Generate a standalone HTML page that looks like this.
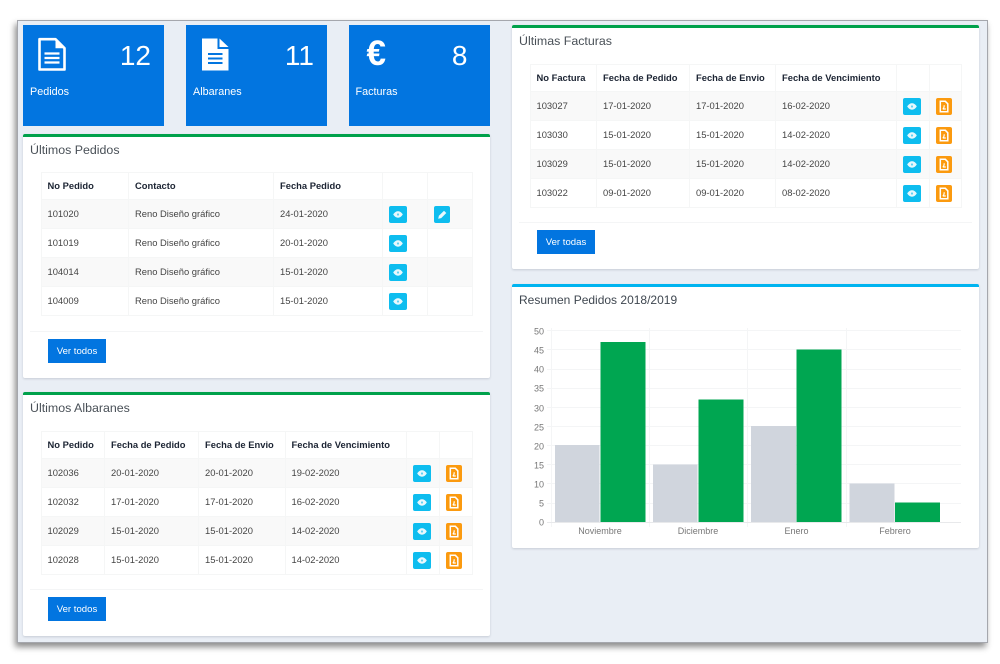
<!DOCTYPE html>
<html lang="es"><head><meta charset="utf-8"><title>Panel</title>
<style>
*{box-sizing:border-box}
html,body{margin:0;padding:0;width:1000px;height:664px;overflow:hidden;background:#fff;font-family:"Liberation Sans",sans-serif}
.win{position:absolute;left:17px;top:20px;width:971px;height:623px;background:#e9eef5;border:1px solid #a5a7ad;box-shadow:-2px 4px 6px rgba(0,0,0,.45)}
.abs{position:absolute}
.tile{position:absolute;top:25px;width:141px;height:101px;background:#0275e0;color:#fff}
.tile .n{position:absolute;top:15px;right:13px;font-size:28px;line-height:32px}
.tile .l{position:absolute;left:7px;top:60px;font-size:10.8px;line-height:14px}
.tile svg{position:absolute}
.card{position:absolute;background:#fff;border-top:3px solid #00a14b;border-radius:2px;box-shadow:0 1px 2px rgba(60,70,90,.2)}
.card h3{position:absolute;margin:0;left:7px;top:4px;font-weight:400;font-size:12.4px;line-height:18px;color:#495057}
.line{position:absolute;height:1px;background:#f4f5f6}
.btn{position:absolute;width:58px;height:24px;background:#0275e0;color:#fff;font-size:9.6px;line-height:26px;text-align:center}
table{position:absolute;border-collapse:collapse;table-layout:fixed;font-size:9.4px;color:#444}
td,th{border:1px solid #f5f6f6;padding:0 0 2px 6px;text-align:left;white-space:nowrap;position:relative}
th{height:27px;font-weight:700;color:#1c2433;font-size:9.4px}
td{height:29px}
tr.o td{background:#f9f9f9}
.i{position:absolute;display:block;top:6px;height:17px;border-radius:2px}
.e{background:#0ebdef;width:18px;left:6px}
.f{background:#fb9a0f;width:16px;left:6px}
.i svg{display:block;width:100%;height:100%}
</style></head><body>
<svg width="0" height="0" style="position:absolute"><defs>
<symbol id="eye" viewBox="0 0 18 17"><path d="M4.200 8.500C5.800 6.200 7.300 5.300 9 5.300s3.200 .9 4.800 3.200c-1.600 2.300-3.100 3.200-4.800 3.200s-3.200-.9-4.800-3.200z" fill="#e8f8fd"/><circle cx="9" cy="8.500" r="1.100" fill="#5fd2f3"/></symbol>
<symbol id="pdf" viewBox="0 0 16 17"><path d="M4.300 3.300h5l2.500 2.500v7.900H4.300z" fill="none" stroke="#fff" stroke-width="1.500"/><path d="M6.800 11c1.200-.8 1.400-2.300 1.400-3.800M6.800 11h3" fill="none" stroke="#fff" stroke-width="1.200"/></symbol>
<symbol id="pen" viewBox="0 0 16 17"><path d="M4.200 12.800l.7-3 5.100-5.100 2.300 2.300-5.100 5.100z" fill="#e8f8fd"/></symbol>
</defs></svg>
<div class="win"></div>

<div class="tile" style="left:23px"><svg style="left:14px;top:12px" width="30" height="35" viewBox="0 0 30 35"><path d="M2.500 2.200h16l9 9v21.300H2.500z" fill="none" stroke="#fff" stroke-width="2.600" stroke-linejoin="round"/><path d="M18.500 2v9.200h9.200z" fill="#fff"/><path d="M7.500 16.500h15M7.500 21h15M7.500 25.500h15" stroke="#fff" stroke-width="2.200"/></svg><div class="n">12</div><div class="l">Pedidos</div></div>
<div class="tile" style="left:186px"><svg style="left:14px;top:12px" width="30" height="35" viewBox="0 0 30 35"><path d="M2 1.500h15.500v10.500H28.500v21.500H2z" fill="#fff"/><path d="M19.500 1.500l9 8.500h-9z" fill="#fff"/><path d="M8 17h14.500M8 21.500h14.500M8 26h14.500" stroke="#0275e0" stroke-width="2"/></svg><div class="n">11</div><div class="l">Albaranes</div></div>
<div class="tile" style="left:348.500px"><div class="abs" style="left:18px;top:8px;font-size:35px;line-height:42px;font-weight:700">€</div><div class="n" style="right:22px">8</div><div class="l">Facturas</div></div>

<!-- Pedidos -->
<div class="card" style="left:23px;top:134px;width:467px;height:244px"><h3>Últimos Pedidos</h3>
<table style="left:17.500px;top:35px;width:431.500px"><colgroup><col style="width:87.500px"><col style="width:145px"><col style="width:109px"><col style="width:45px"><col style="width:45px"></colgroup>
<tr><th>No Pedido</th><th>Contacto</th><th>Fecha Pedido</th><th></th><th></th></tr>
<tr class="o"><td>101020</td><td>Reno Diseño gráfico</td><td>24-01-2020</td><td><span class="i e"><svg><use href="#eye"/></svg></span></td><td><span class="i e" style="width:16px"><svg><use href="#pen"/></svg></span></td></tr>
<tr><td>101019</td><td>Reno Diseño gráfico</td><td>20-01-2020</td><td><span class="i e"><svg><use href="#eye"/></svg></span></td><td></td></tr>
<tr class="o"><td>104014</td><td>Reno Diseño gráfico</td><td>15-01-2020</td><td><span class="i e"><svg><use href="#eye"/></svg></span></td><td></td></tr>
<tr><td>104009</td><td>Reno Diseño gráfico</td><td>15-01-2020</td><td><span class="i e"><svg><use href="#eye"/></svg></span></td><td></td></tr>
</table><div class="line" style="left:7px;right:7px;top:194px"></div><div class="btn" style="left:25px;top:202px">Ver todos</div></div>

<!-- Albaranes -->
<div class="card" style="left:23px;top:392px;width:467px;height:244px"><h3>Últimos Albaranes</h3>
<table style="left:17.500px;top:36px;width:431.500px"><colgroup><col style="width:63.500px"><col style="width:94px"><col style="width:86.500px"><col style="width:121px"><col style="width:33px"><col style="width:33.500px"></colgroup>
<tr><th>No Pedido</th><th>Fecha de Pedido</th><th>Fecha de Envio</th><th>Fecha de Vencimiento</th><th></th><th></th></tr>
<tr class="o"><td>102036</td><td>20-01-2020</td><td>20-01-2020</td><td>19-02-2020</td><td><span class="i e"><svg><use href="#eye"/></svg></span></td><td><span class="i f"><svg><use href="#pdf"/></svg></span></td></tr>
<tr><td>102032</td><td>17-01-2020</td><td>17-01-2020</td><td>16-02-2020</td><td><span class="i e"><svg><use href="#eye"/></svg></span></td><td><span class="i f"><svg><use href="#pdf"/></svg></span></td></tr>
<tr class="o"><td>102029</td><td>15-01-2020</td><td>15-01-2020</td><td>14-02-2020</td><td><span class="i e"><svg><use href="#eye"/></svg></span></td><td><span class="i f"><svg><use href="#pdf"/></svg></span></td></tr>
<tr><td>102028</td><td>15-01-2020</td><td>15-01-2020</td><td>14-02-2020</td><td><span class="i e"><svg><use href="#eye"/></svg></span></td><td><span class="i f"><svg><use href="#pdf"/></svg></span></td></tr>
</table><div class="line" style="left:7px;right:7px;top:194px"></div><div class="btn" style="left:25px;top:202px">Ver todos</div></div>

<!-- Facturas -->
<div class="card" style="left:512px;top:25px;width:467px;height:244px"><h3>Últimas Facturas</h3>
<table style="left:17.500px;top:36px;width:431.500px"><colgroup><col style="width:66.500px"><col style="width:93px"><col style="width:86px"><col style="width:121px"><col style="width:32.500px"><col style="width:32.500px"></colgroup>
<tr><th>No Factura</th><th>Fecha de Pedido</th><th>Fecha de Envio</th><th>Fecha de Vencimiento</th><th></th><th></th></tr>
<tr class="o"><td>103027</td><td>17-01-2020</td><td>17-01-2020</td><td>16-02-2020</td><td><span class="i e"><svg><use href="#eye"/></svg></span></td><td><span class="i f"><svg><use href="#pdf"/></svg></span></td></tr>
<tr><td>103030</td><td>15-01-2020</td><td>15-01-2020</td><td>14-02-2020</td><td><span class="i e"><svg><use href="#eye"/></svg></span></td><td><span class="i f"><svg><use href="#pdf"/></svg></span></td></tr>
<tr class="o"><td>103029</td><td>15-01-2020</td><td>15-01-2020</td><td>14-02-2020</td><td><span class="i e"><svg><use href="#eye"/></svg></span></td><td><span class="i f"><svg><use href="#pdf"/></svg></span></td></tr>
<tr><td>103022</td><td>09-01-2020</td><td>09-01-2020</td><td>08-02-2020</td><td><span class="i e"><svg><use href="#eye"/></svg></span></td><td><span class="i f"><svg><use href="#pdf"/></svg></span></td></tr>
</table><div class="line" style="left:7px;right:7px;top:194px"></div><div class="btn" style="left:25px;top:202px">Ver todas</div></div>

<!-- Resumen -->
<div class="card" style="left:512px;top:284px;width:467px;height:264px;border-top-color:#00b4f0"><h3 style="top:3.500px;font-size:12px;color:#3f4750">Resumen Pedidos 2018/2019</h3></div>
<svg class="abs" style="left:512px;top:320px" width="467" height="225" viewBox="512 320 467 225">
<g stroke="#f4f5f6" stroke-width="1">
<path d="M547 330.500H961M547 349.500H961M547 369.500H961M547 388.500H961M547 407.500H961M547 426.500H961M547 445.500H961M547 464.500H961M547 483.500H961M547 503.500H961"/>
<path d="M551.500 328V527M649.500 328V527M747.500 328V527M846.500 328V527"/>
</g>
<path d="M547 522.500H961" stroke="#e8e9eb"/>
<g fill="#d0d5dd"><rect x="555" y="445" width="44.500" height="77"/><rect x="653" y="464.500" width="44.500" height="57.500"/><rect x="751" y="426" width="45" height="96"/><rect x="849.500" y="483.500" width="45" height="38.500"/></g>
<g fill="#00a651"><rect x="600.500" y="342" width="45" height="180"/><rect x="698.500" y="399.500" width="45" height="122.500"/><rect x="796.500" y="349.500" width="45" height="172.500"/><rect x="895" y="502.500" width="45" height="19.500"/></g>
<g font-family="Liberation Sans,sans-serif" font-size="9" fill="#777" text-anchor="end">
<text x="544" y="334.500">50</text><text x="544" y="353.500">45</text><text x="544" y="372.500">40</text><text x="544" y="391.500">35</text><text x="544" y="411.500">30</text><text x="544" y="430.500">25</text><text x="544" y="449.500">20</text><text x="544" y="468.500">15</text><text x="544" y="487.500">10</text><text x="544" y="506.500">5</text><text x="544" y="525.500">0</text></g>
<g font-family="Liberation Sans,sans-serif" font-size="9" fill="#777" text-anchor="middle">
<text x="600" y="534">Noviembre</text><text x="698" y="534">Diciembre</text><text x="796.500" y="534">Enero</text><text x="895" y="534">Febrero</text></g>
</svg>
</body></html>
